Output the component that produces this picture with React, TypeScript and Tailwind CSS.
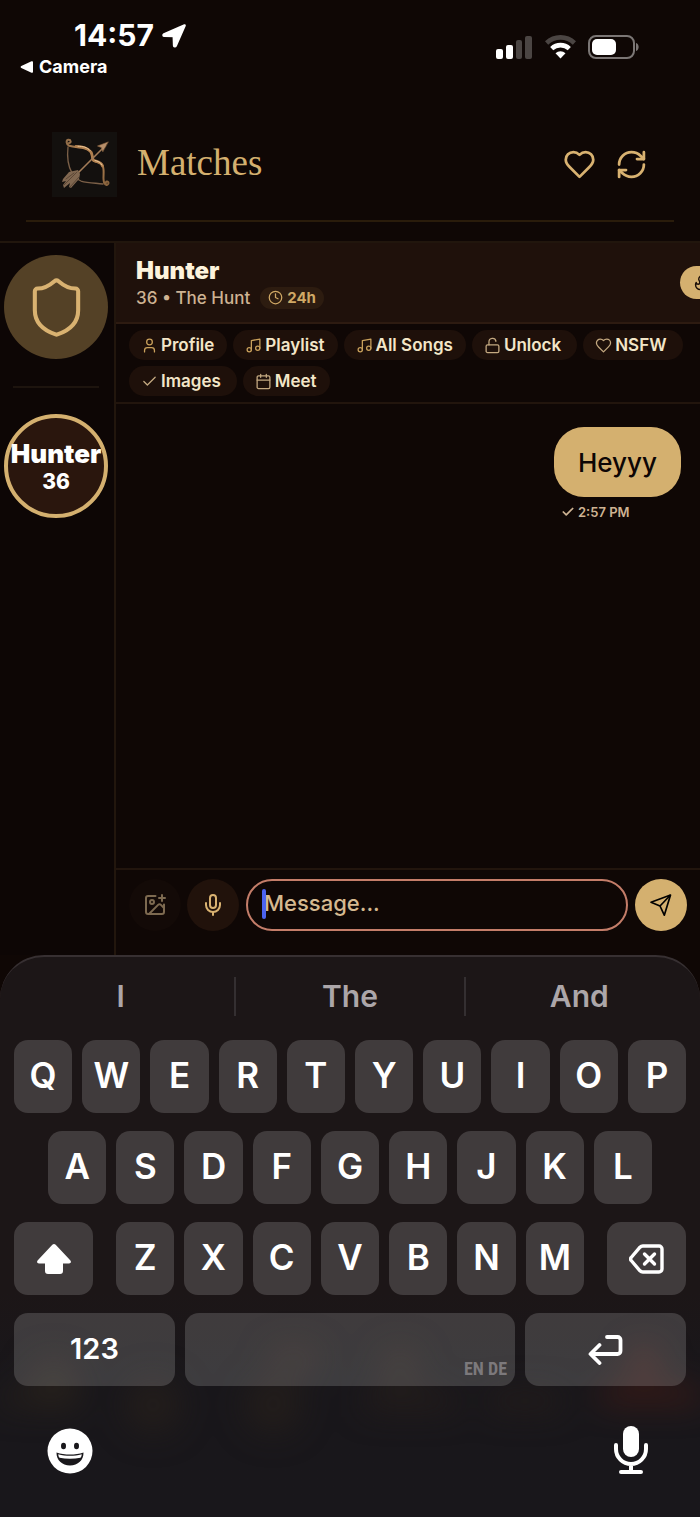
import React, { useState } from 'react';
import {
  Calendar,
  Check,
  Clock,
  Flame,
  ImagePlus,
  LockOpen,
  Mic,
  Music,
  Shield,
  User,
} from 'lucide-react';

interface IconProps {
  size?: number;
  strokeWidth?: number;
  className?: string;
}

const HeartIcon = ({ size = 24, strokeWidth = 2, className }: IconProps) => (
  <svg width={size} height={size} viewBox="0 0 24 24" fill="none" stroke="currentColor" strokeWidth={strokeWidth} strokeLinecap="round" strokeLinejoin="round" className={className}>
    <path d="M19 14c1.49-1.46 3-3.21 3-5.5A5.5 5.5 0 0 0 16.5 3c-1.76 0-3 .5-4.5 2-1.5-1.5-2.74-2-4.5-2A5.5 5.5 0 0 0 2 8.5c0 2.3 1.5 4.05 3 5.5l7 7Z" />
  </svg>
);

const RefreshIcon = ({ size = 24 }: IconProps) => (
  <svg width={size} height={size} viewBox="0 0 24 24" fill="none" stroke="currentColor" strokeWidth="2" strokeLinecap="round" strokeLinejoin="round">
    <path d="M3 12a9 9 0 0 1 9-9 9.75 9.75 0 0 1 6.74 2.74L21 8" />
    <path d="M21 3v5h-5" />
    <path d="M21 12a9 9 0 0 1-9 9 9.75 9.75 0 0 1-6.74-2.74L3 16" />
    <path d="M8 16H3v5" />
  </svg>
);

const SendIcon = () => (
  <svg width="24" height="24" viewBox="0 0 24 24" fill="none" stroke="currentColor" strokeWidth="1.7" strokeLinejoin="round">
    <path d="M21.5 2 2 9.2l9 3.8 4.3 9.2z" />
    <path d="M21.5 2 11 13" />
  </svg>
);

interface Action {
  label: string;
  icon: React.ComponentType<IconProps>;
  gold?: boolean;
  toggle?: boolean;
}

const ACTIONS: Action[] = [
  { label: 'Profile', icon: User, gold: true },
  { label: 'Playlist', icon: Music, gold: true },
  { label: 'All Songs', icon: Music, gold: true },
  { label: 'Unlock', icon: LockOpen, toggle: true },
  { label: 'NSFW', icon: HeartIcon, toggle: true },
  { label: 'Images', icon: Check, toggle: true },
  { label: 'Meet', icon: Calendar },
];

const KEY = 'h-[73px] rounded-[14px] bg-white/16 text-white flex items-center justify-center';

const StatusBar = () => (
  <div className="flex items-start justify-between h-[118px] pl-5 pr-[61px] text-white">
    <div className="pt-[18px]">
      <div className="flex items-center gap-2 pl-[54px] h-[34px]">
        <span className="text-[30px] leading-[34px] font-bold">14:57</span>
        <svg width="25" height="25" viewBox="0 0 25 25" fill="currentColor" stroke="currentColor" strokeWidth="2.5" strokeLinejoin="round">
          <path d="M22.6 2.4 2 11.4c-.8.4-.6 1.4.2 1.4l9.6.2.3 9.4c0 1 1.2 1.1 1.6.3z" />
        </svg>
      </div>
      <div className="flex items-center gap-[6px] h-[30px]">
        <svg width="13" height="12" viewBox="0 0 13 12" fill="currentColor">
          <path d="M11.5.3 1.3 5.1c-.9.4-.9 1.4 0 1.8l10.2 4.8c.8.3 1.5-.1 1.500-.9V1.200c0-.8-.7-1.200-1.500-.9z" />
        </svg>
        <span className="text-[18px] leading-6 font-bold">Camera</span>
      </div>
    </div>
    <div className="flex items-center gap-3 pt-[34px]">
      <svg width="37" height="25" viewBox="0 0 37 25" fill="currentColor">
        <rect x="0" y="15" width="7" height="10" rx="2" />
        <rect x="10" y="11" width="7" height="14" rx="2" />
        <rect x="20" y="6" width="6" height="19" rx="2" opacity=".25" />
        <rect x="29" y="2" width="7" height="23" rx="2" opacity=".25" />
      </svg>
      <svg width="31" height="25" viewBox="0 0 31 25" fill="none" stroke="currentColor" strokeWidth="4.6">
        <path d="M1.6 9a20 20 0 0 1 27.8 0" opacity=".25" />
        <path d="M6.7 14.6a13 13 0 0 1 17.6 0" />
        <path d="M10.5 19.2a7.500 7.500 0 0 1 10 0l-5 5.200z" fill="currentColor" stroke="none" />
      </svg>
      <svg width="51" height="25" viewBox="0 0 51 25" fill="none">
        <rect x="1" y="2" width="45" height="22" rx="7" stroke="#fff" strokeOpacity=".45" strokeWidth="2" />
        <rect x="4" y="5" width="24" height="16" rx="5" fill="#fff" />
        <path d="M48 9c3.5.8 3.5 7.2 0 8z" fill="#fff" opacity=".45" />
      </svg>
    </div>
  </div>
);

const BowLogo = () => (
  <div className="size-[65px] bg-[#13100e] shrink-0">
    <svg width="65" height="65" viewBox="0 0 65 65" fill="none" strokeLinecap="round" strokeLinejoin="round">
      <defs>
        <linearGradient id="bow" x1="0" y1="0" x2="1" y2="1">
          <stop offset="0" stopColor="#8f6b47" />
          <stop offset=".45" stopColor="#c8935c" />
          <stop offset="1" stopColor="#85603b" />
        </linearGradient>
      </defs>
      <path d="M16 15c-1 9 0 19 4 26 2 4 4 6 9 8 7 2 14 2 22 3" stroke="#7c6048" strokeWidth="1.3" />
      <path
        d="M17 11c2.5 0 2-3.5-.5-3.3-2.7.3-2.5 4.7.8 6.100 7 2.400 17 .2 21.500 6.200 2.400 3.200.2 7 3 8.800 3.200 2 7.200.5 9 5.200 2.200 6-.7 12.500 1.600 17.300 1.500 2.800 4.800 1.300 4-.9-.6-1.600-2.900-.9-2.500.5"
        stroke="url(#bow)"
        strokeWidth="2"
      />
      <path d="M24 14.500c6 .3 11 .5 15 5.500 2 3 .8 6.500 2.500 8.300 4 1.800 7.500 1.500 9 5.700" stroke="#b07f4e" strokeWidth="2.800" />
      <path d="M26 14.200c5 .2 9 .8 12 4.300M43 28.500c3 .8 5.500 1.500 7 4.500" stroke="#ecc798" />
      <path d="M16 51 53 14" stroke="#a37c58" strokeWidth="1.600" />
      <path d="m56 10-10.500 4 3.800 1.500 1.400 4z" fill="#b8906b" stroke="#8f6742" strokeWidth=".6" />
      <path d="m17 40 9-2 2 4-1 5-8 9-2-1 1-4-6 5-1-3 3-4-4 1 1-3z" fill="#806750" />
      <path d="m12 53 13-13M18 55l9-10M14 47l8-6" stroke="#4a382a" strokeWidth=".7" />
    </svg>
  </div>
);

const PageHeader = () => (
  <header className="mx-[26px] h-[104px] px-[26px] pt-[14px] flex items-start justify-between border-b-2 border-[#2a1c0b]">
    <div className="flex items-center gap-5">
      <BowLogo />
      <h1 className="pb-1 font-['Liberation_Serif',serif] text-[37px] leading-[40px] text-[#d4b06f]">Matches</h1>
    </div>
    <div className="flex items-center h-[65px] gap-[19px] text-[#d9b271]">
      <button aria-label="Likes">
        <HeartIcon size={33} />
      </button>
      <button aria-label="Refresh">
        <RefreshIcon size={33} />
      </button>
    </div>
  </header>
);

const Sidebar = () => (
  <aside className="w-[116px] shrink-0 border-r-2 border-[#22160d] bg-[#0d0605] pt-3 pl-1">
    <button aria-label="Safety" className="size-[104px] rounded-full bg-[#544126] flex items-center justify-center text-[#d9b271]">
      <Shield size={65} strokeWidth={1.5} />
    </button>
    <hr className="mt-[27px] ml-[9px] mr-[15px] border-t-2 border-[#1d140e]" />
    <button className="mt-[26px] size-[104px] rounded-full border-4 border-[#d4b06f] bg-[#2a160d] flex flex-col items-center justify-center text-white">
      <span className="pt-1 text-[26px] leading-[28px] font-black">Hunter</span>
      <span className="text-[21px] leading-[28px] font-extrabold">36</span>
    </button>
  </aside>
);

const ChatHeader = () => (
  <div className="h-[81px] pl-5 flex items-center justify-between overflow-hidden bg-[#1f110b] border-b-2 border-[#2d1b11]">
    <div className="flex flex-col">
      <h2 className="text-[24px] leading-[30px] font-black text-[#fdf3dc]">Hunter</h2>
      <div className="flex items-center gap-[10px] text-[17px] leading-6 font-medium text-[#ceb393]">
        <span>36 • The Hunt</span>
        <span className="flex items-center gap-1 h-[22px] px-2 rounded-full bg-[#2d1c10] text-[15px] font-bold text-[#d0a965]">
          <Clock size={15} />
          24h
        </span>
      </div>
    </div>
    <button aria-label="Hunt" className="-mr-7 w-12 h-[33px] shrink-0 rounded-full bg-[#d4b06f] text-[#1a0e08] flex items-center pl-3">
      <Flame size={17} />
    </button>
  </div>
);

const Composer = () => {
  const [message, setMessage] = useState('');

  return (
    <form
      onSubmit={(e) => e.preventDefault()}
      className="h-[87px] px-[13px] pt-[9px] flex items-start border-t-2 border-[#22150d]"
    >
      <button type="button" aria-label="Add image" className="size-[52px] shrink-0 rounded-full bg-[#130a07] text-[#7d6a50] flex items-center justify-center">
        <ImagePlus size={24} />
      </button>
      <button type="button" aria-label="Record" className="ml-[6px] size-[52px] shrink-0 rounded-full bg-[#21120b] text-[#d9b271] flex items-center justify-center">
        <Mic size={24} />
      </button>
      <div className="relative mx-[7px] flex-1 min-w-0">
        <input
          aria-label="Message"
          value={message}
          onChange={(e) => setMessage(e.target.value)}
          placeholder="Message..."
          className="w-full h-[52px] rounded-full border-2 border-[#c47d69] pl-4 pr-4 pb-1 bg-transparent text-[22px] font-medium text-[#fdf3dc] placeholder:text-[#d5b990] focus:outline-none"
        />
        <span className="absolute left-4 top-[10px] w-1 h-[30px] rounded-full bg-[#4b63f0]" />
      </div>
      <button aria-label="Send" className="size-[52px] shrink-0 rounded-full bg-[#d4b06f] text-black flex items-center justify-center">
        <SendIcon />
      </button>
    </form>
  );
};

const Chat = () => (
  <main className="flex-1 min-w-0 flex flex-col">
    <ChatHeader />
    <div className="flex flex-wrap gap-[6px] pl-[13px] pr-3 py-[6px] border-b-2 border-[#22150d]">
      {ACTIONS.map(({ label, icon: Icon, gold, toggle }) => (
        <button
          key={label}
          className={`h-[30px] pl-3 ${toggle ? 'pr-4' : 'pr-[13px]'} rounded-full bg-[#1e100a] flex items-center gap-[3px] text-[17px] leading-6 font-semibold text-[#f3e6c8]`}
        >
          <Icon size={17} strokeWidth={1.8} className={gold ? 'text-[#c9a15c]' : 'text-[#c4a981]'} />
          {label}
        </button>
      ))}
    </div>
    <div className="flex-1 pt-[23px] pr-[19px] flex flex-col items-end">
      <div className="w-[127px]">
        <p className="h-[70px] rounded-[30px] bg-[#d4b06f] text-[#0d0605] text-[26px] font-medium flex items-center justify-center">
          Heyyy
        </p>
        <p className="mt-[5px] pl-[7px] flex items-center gap-[3px] text-[13px] leading-5 font-semibold text-[#ceb393]">
          <Check size={14} strokeWidth={3} />
          2:57 PM
        </p>
      </div>
    </div>
    <Composer />
  </main>
);

const KeyRow = ({ letters }: { letters: string }) => (
  <>
    {letters.split('').map((letter) => (
      <button key={letter} className={`${KEY} flex-1 pb-1 text-[35px] leading-[40px] font-semibold`}>
        {letter}
      </button>
    ))}
  </>
);

const Keyboard = () => (
  <div className="relative overflow-hidden h-[562px] rounded-t-[44px] border-t-2 border-[#373032] bg-linear-to-b from-[#1c1617] from-60% to-[#19171b] to-75%">
    {/* blurred tab bar shining through the glass */}
    <div className="absolute inset-x-0 bottom-[60px] h-[110px] blur-lg pointer-events-none">
      <span className="absolute left-[30px] top-[10px] size-12 rounded-full bg-[#30271e]/50" />
      <span className="absolute left-0 top-[46px] w-20 h-3 bg-[#30261a]/70" />
      <span className="absolute left-[125px] top-[30px] size-14 rounded-full bg-[#2a211a]/60" />
      <span className="absolute left-[245px] top-[30px] size-14 rounded-full bg-[#2a211a]/60" />
      <span className="absolute left-[270px] top-0 w-12 h-6 rounded-full bg-[#30271e]/60" />
      <span className="absolute left-[380px] top-0 size-10 rounded-full bg-[#30271e]/50" />
      <span className="absolute left-[365px] top-[46px] w-[90px] h-4 bg-[#291f1a]/80" />
      <span className="absolute left-[490px] top-[46px] w-[70px] h-4 bg-[#291f1a]/80" />
      <span className="absolute right-[40px] top-0 size-8 rounded-full bg-[#521c14]/60" />
      <span className="absolute right-0 top-[42px] w-[100px] h-3 bg-[#571d11]/80" />
    </div>

    <div className="relative flex flex-col">
      <div className="h-[78px] mb-[5px] px-[7px] flex items-center text-[30px] leading-[38px] font-semibold text-[#aca6a9]">
        <button className="flex-1">I</button>
        <span className="w-[2px] h-[39px] bg-[#342f31]" />
        <button className="flex-1">The</button>
        <span className="w-[2px] h-[39px] bg-[#342f31]" />
        <button className="flex-1">And</button>
      </div>

      <div className="flex flex-col gap-[18px]">
        <div className="flex gap-[10px] px-[14px]">
          <KeyRow letters="QWERTYUIOP" />
        </div>
        <div className="flex gap-[10px] px-12">
          <KeyRow letters="ASDFGHJKL" />
        </div>
        <div className="flex gap-[23px] px-[14px]">
          <button aria-label="Shift" className={`${KEY} w-[79px]`}>
            <svg width="36" height="32" viewBox="0 0 36 32" fill="currentColor">
              <path d="M16.3 1.800a2.500 2.500 0 0 1 3.400 0L34.200 17.200c1.400 1.500.6 3.300-1.200 3.300h-6v7.500a3 3 0 0 1-3 3H12a3 3 0 0 1-3-3v-7.500H3c-1.800 0-2.600-1.800-1.200-3.300z" />
            </svg>
          </button>
          <div className="flex flex-1 gap-[10px]">
            <KeyRow letters="ZXCVBNM" />
          </div>
          <button aria-label="Backspace" className={`${KEY} w-[79px]`}>
            <svg width="35" height="30" viewBox="0 0 35 30" fill="none" stroke="currentColor" strokeWidth="3.4" strokeLinecap="round" strokeLinejoin="round">
              <path d="M14 2h16a3 3 0 0 1 3 3v20a3 3 0 0 1-3 3H14a4 4 0 0 1-3-1.200L2.200 16.500a2.200 2.200 0 0 1 0-3L11 3.200A4 4 0 0 1 14 2z" />
              <path d="m15.500 10 10 10M25.500 10l-10 10" />
            </svg>
          </button>
        </div>
        <div className="flex gap-[10px] px-[14px]">
          <button className={`${KEY} w-[161px] pb-[2px] text-[29px] font-semibold`}>123</button>
          <button aria-label="Space" className={`${KEY} flex-1`}>
            <span className="self-end ml-auto pr-2 pb-1 font-['Liberation_Sans_Narrow','Roboto_Condensed','Open_Sans_Condensed','Liberation_Sans',sans-serif] text-[18px] leading-[26px] font-bold text-[#7c797c]">
              EN DE
            </span>
          </button>
          <button aria-label="Return" className={`${KEY} w-[161px]`}>
            <svg width="35" height="30" viewBox="0 0 35 30" fill="none" stroke="currentColor" strokeWidth="3.8" strokeLinecap="round" strokeLinejoin="round">
              <path d="M19 2h10.500A3 3 0 0 1 32.500 5v11a3 3 0 0 1-3 3H3M11.500 10 2.500 19l9 9" />
            </svg>
          </button>
        </div>
      </div>

      <div className="flex items-center justify-between pl-[47px] pr-[51px] pt-[39px]">
        <button aria-label="Emoji">
          <svg width="46" height="50" viewBox="0 0 46 50">
            <circle cx="23" cy="26" r="22.5" fill="#fff" />
            <ellipse cx="16.5" cy="21" rx="2.5" ry="3.2" fill="#19171b" />
            <ellipse cx="29.5" cy="21" rx="2.5" ry="3.2" fill="#19171b" />
            <path d="M9.500 27.500c8 2.800 19 2.800 27 0 .2 7.500-5.500 13-13.500 13s-13.700-5.500-13.500-13z" fill="#19171b" />
            <path d="M11.300 29.300c7.500 2 16 2 23.400 0 0 1.500-.4 2.500-1.200 3.500-6.500 1.300-14.500 1.300-21 0-.8-1-1.200-2-1.200-3.500z" fill="#fff" />
          </svg>
        </button>
        <button aria-label="Dictate">
          <svg width="36" height="50" viewBox="0 0 36 50" fill="none" stroke="#fff" strokeWidth="4" strokeLinecap="round">
            <rect x="10" y="1" width="16" height="31" rx="8" fill="#fff" stroke="none" />
            <path d="M3 20v4a15 15 0 0 0 30 0v-4M18 39v7M8 47h20" />
          </svg>
        </button>
      </div>
    </div>
  </div>
);

export default function App() {
  return (
    <div className="min-h-screen flex flex-col overflow-hidden bg-[#0f0705] font-['Inter','Liberation_Sans',sans-serif]">
      <StatusBar />
      <PageHeader />
      <div className="mt-[19px] min-h-[714px] flex-1 flex border-t-2 border-[#21160d]">
        <Sidebar />
        <Chat />
      </div>
      <Keyboard />
    </div>
  );
}
